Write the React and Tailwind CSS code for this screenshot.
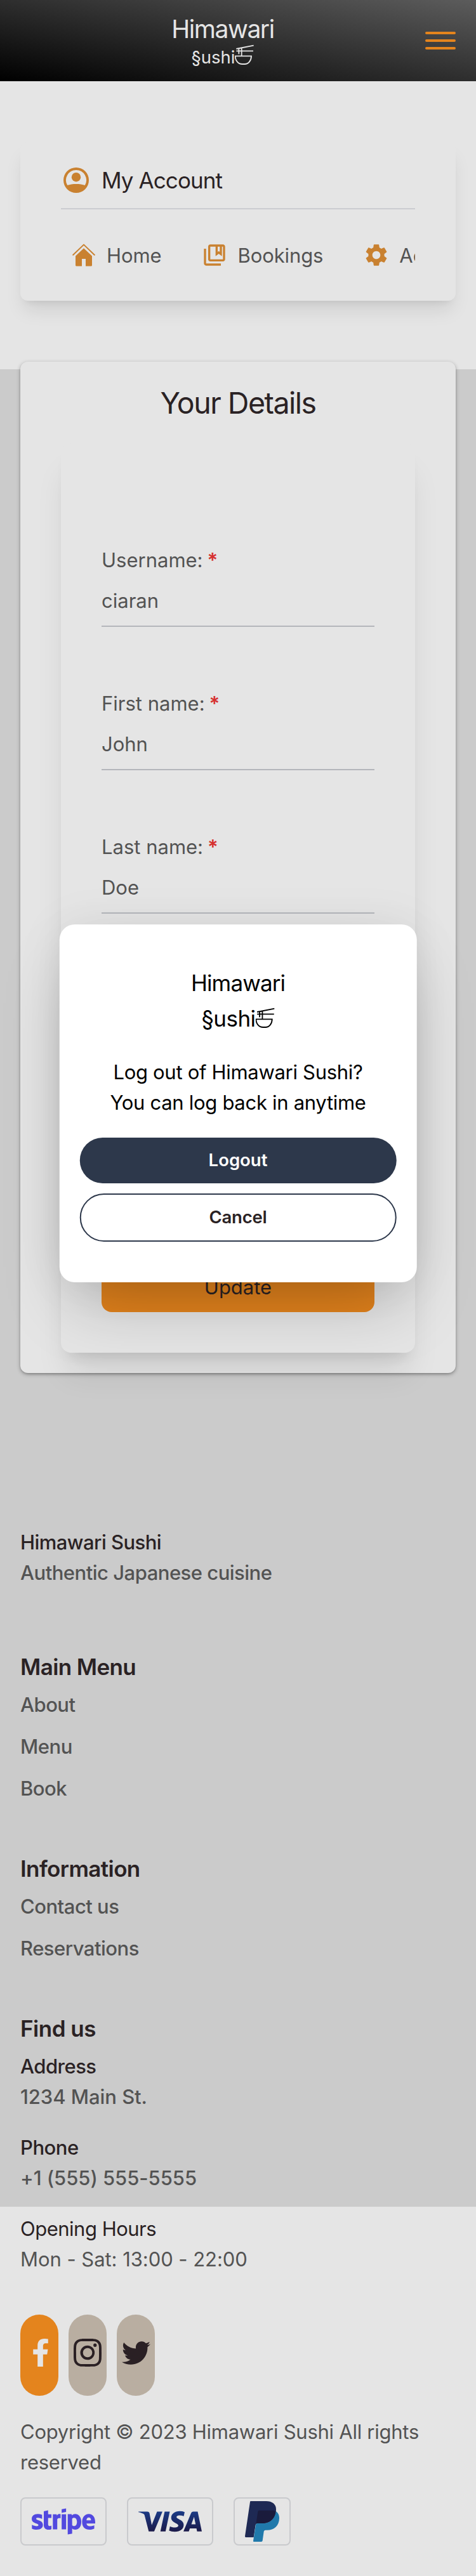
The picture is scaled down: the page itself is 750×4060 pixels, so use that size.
import { MdOutlineCollectionsBookmark, MdSettings } from "react-icons/md";
import { FaFacebookF, FaStripe, FaTwitter } from "react-icons/fa";
import { BsInstagram } from "react-icons/bs";
import { SiVisa } from "react-icons/si";

function BowlIcon({ className }) {
  return (
    <svg viewBox="0 0 90 96" fill="none" stroke="currentColor" strokeWidth="5.5" className={className}>
      <path d="M7 21 89 5M7 31h80M19 19v27M32 14v41" />
      <path d="M2 55h76c0 22-14 38-31 38h-12C16 93 2 77 2 55Z" />
    </svg>
  );
}

function AccountIcon() {
  return (
    <svg viewBox="0 0 40 40" className="h-10 w-10 text-[#c98130]">
      <path
        fill="currentColor"
        fillRule="evenodd"
        d="M20 0a20 20 0 1 1 0 40 20 20 0 0 1 0-40Zm0 4A16 16 0 0 0 6.2 28.1C9.8 26.6 15 26 20 26s10.2.6 13.8 2.1A16 16 0 0 0 20 4Z"
      />
      <circle cx="20" cy="15.2" r="7.2" fill="currentColor" />
    </svg>
  );
}

function HomeIcon() {
  return (
    <svg viewBox="0 0 36 36" className="h-9 w-9">
      <path d="M1.2 17.8 18 1.6l16.8 16.2" fill="none" stroke="currentColor" strokeWidth="2" strokeLinecap="round" strokeLinejoin="round" />
      <path d="M18 7.2 31 19.4V34q0 1.6-1.6 1.6H21V24h-6v11.6H6.6Q5 35.600 5 34V19.4Z" fill="currentColor" />
    </svg>
  );
}

function PaypalIcon() {
  return (
    <svg viewBox="0 0 162 192" className="h-16 w-[54px]">
      <path d="M28 0h72c28 0 47 14 47 38 0 42-26 67-65 67H60c-6 0-9 3-10 8l-9 58H4c-3 0-4-2-4-5L24 4c0-3 2-4 4-4Z" fill="#1e2954" />
      <path d="M146 48c12 8 16 20 16 32 0 36-24 57-58 57h-7c-5 0-7 3-8 7l-6 43c-1 3-3 5-6 5H43c-3 0-4-2-4-4l12-76c1-5 4-7 9-7h22c36 0 60-21 64-57Z" fill="#2079ab" />
      <path d="M66 44h60c8 0 15 1 20 4-4 36-28 57-64 57H60c-3 0-6 1-8 3l9-58c1-4 2-6 5-6Z" fill="#1a1b3c" />
    </svg>
  );
}

function Tab({ icon, label }) {
  return (
    <div className="flex shrink-0 items-center gap-4 px-4">
      <span className="flex h-10 w-10 items-center justify-center text-[#c98130]">{icon}</span>
      <span className="pt-0.5 text-[31px] leading-[48px] tracking-[-0.1px] text-[#535353]">{label}</span>
    </div>
  );
}

function Field({ label, value }) {
  return (
    <div className="flex flex-col gap-4">
      <div className="h-12 pt-px text-[31px] leading-[48px] text-[#535353]">
        {label}
        {label && <span className="ml-[7px] font-semibold text-[#d6302f]">*</span>}
      </div>
      <div className="flex h-[66px] items-start border-b-2 border-[#b4b6bb] pt-px text-[31px] leading-[48px] text-[#535353]">
        {value}
      </div>
    </div>
  );
}

function FooterMenu({ title, items }) {
  return (
    <nav className="pb-14">
      <h3 className="mb-2 text-[35px] leading-[56px] font-semibold tracking-[-0.6px] text-[#2a2224]">{title}</h3>
      <ul>
        {items.map((item) => (
          <li key={item} className="pb-[18px] text-[31px] leading-[48px] font-medium tracking-[-0.5px] text-[#535353]">
            {item}
          </li>
        ))}
      </ul>
    </nav>
  );
}

function Contact({ title, className, children }) {
  return (
    <div className={className}>
      <p className="tracking-[-0.5px] text-[#2a2224]">{title}</p>
      <p className="tracking-[-0.05px] text-[#535353]">{children}</p>
    </div>
  );
}

const cardShadow = "shadow-[0_20px_30px_-6px_rgba(0,0,0,0.1),0_8px_12px_-8px_rgba(0,0,0,0.1)]";

export default function App() {
  return (
    <div className="relative h-[4060px] w-[750px] overflow-hidden bg-[linear-gradient(#e5e5e5_582px,#cbcbcb_582px,#cbcbcb_3478px,#e5e5e5_3478px)] font-['Inter','Liberation_Sans',sans-serif]">
      <header className="flex h-32 items-center bg-[linear-gradient(to_top_right,#000000,#5c5c5c)] px-8">
        <div className="flex flex-1 flex-col items-center text-[#e5e5e5]">
          <span className="text-[39px] leading-[56px] tracking-[-1.45px]">Himawari</span>
          <span className="-mt-1 flex items-center text-[27.5px] leading-10">
            §ushi
            <BowlIcon className="mb-[9px] h-8 w-[30px]" />
          </span>
        </div>
        <button className="flex w-12 flex-col gap-2" aria-label="Menu">
          <span className="h-1 w-full rounded-full bg-[#e4841d]" />
          <span className="h-1 w-full rounded-full bg-[#e4841d]" />
          <span className="h-1 w-full rounded-full bg-[#e4841d]" />
        </button>
      </header>

      <main className="flex flex-col gap-24 px-8 pt-24">
        <section className={`h-[250px] rounded-xl bg-[#e5e5e5] px-16 ${cardShadow}`}>
          <div className="flex h-[106px] items-center gap-4 border-b-2 border-[#cbccd0] pt-4">
            <span className="flex h-12 w-12 items-center justify-center">
              <AccountIcon />
            </span>
            <h1 className="text-[35px] leading-[56px] tracking-[-0.92px] text-[#2a2224]">My Account</h1>
          </div>
          <div className="flex h-36 items-center gap-8 overflow-hidden">
            <Tab icon={<HomeIcon />} label="Home" />
            <Tab icon={<MdOutlineCollectionsBookmark className="h-10 w-10 shrink-0" />} label="Bookings" />
            <Tab icon={<MdSettings className="h-[42px] w-[42px] shrink-0" />} label="Account" />
          </div>
        </section>

        <section className="rounded-xl bg-[#e5e5e5] px-16 py-8 shadow-[0_2px_6px_rgba(0,0,0,0.3),0_2px_4px_-2px_rgba(0,0,0,0.3)]">
          <h2 className="h-16 pt-px text-center text-[46.5px] leading-[64px] tracking-[-1.5px] text-[#2a2224]">Your Details</h2>
          <form className="mt-8 flex flex-col gap-24 rounded-2xl bg-[#e5e5e5] px-16 pt-40 pb-16 shadow-[0_40px_50px_-10px_rgba(0,0,0,0.1),0_16px_20px_-12px_rgba(0,0,0,0.1)]">
            <Field label="Username:" value="ciaran" />
            <Field label="First name:" value="John" />
            <Field label="Last name:" value="Doe" />
            <Field />
            <Field />
            <div className="flex h-20 items-center justify-center rounded-2xl bg-[#e4841d] pt-0.5 text-[31px] text-[#2a2224]">
              Update
            </div>
          </form>
        </section>
      </main>

      <footer className="px-8 pt-[243px] text-[31px] leading-[48px] font-medium">
        <div className="mb-24">
          <p className="tracking-[-0.54px] text-[#2a2224]">Himawari Sushi</p>
          <p className="tracking-[-0.5px] text-[#535353]">Authentic Japanese cuisine</p>
        </div>
        <FooterMenu title="Main Menu" items={["About", "Menu", "Book"]} />
        <FooterMenu title="Information" items={["Contact us", "Reservations"]} />
        <h3 className="mb-2 text-[35px] leading-[56px] font-semibold tracking-[-0.5px] text-[#2a2224]">Find us</h3>
        <div className="flex flex-col gap-8">
          <Contact title="Address">1234 Main St.</Contact>
          <Contact title="Phone">+1 (555) 555-5555</Contact>
          <Contact title="Opening Hours" className="font-normal">
            Mon - Sat: 13:00 - 22:00
          </Contact>
        </div>
        <div className="mt-[63px] flex gap-4">
          <a className="flex h-32 w-[60px] items-center justify-center rounded-full bg-[#e4841d] pb-2 text-[#e5e5e5]">
            <FaFacebookF className="ml-1 h-11 w-11 shrink-0" />
          </a>
          <a className="flex h-32 w-[60px] items-center justify-center rounded-full bg-[#b9aea1] pb-2 text-[#2a2024]">
            <BsInstagram className="h-11 w-11 shrink-0" />
          </a>
          <a className="flex h-32 w-[60px] items-center justify-center rounded-full bg-[#b9aea1] pb-2 text-[#2a2024]">
            <FaTwitter className="h-[45px] w-[45px] shrink-0" />
          </a>
        </div>
        <p className="mt-[33px] font-normal tracking-[-0.26px] text-[#535353]">
          Copyright © 2023 Himawari Sushi All rights reserved
        </p>
        <div className="mt-[31px] flex gap-8">
          <span className="flex h-[76px] w-[136px] items-center justify-center rounded-lg border-2 border-[#c9cacd] text-[#5249df]">
            <FaStripe className="h-20 w-[100px] shrink-0" />
          </span>
          <span className="flex h-[76px] w-[136px] items-center justify-center rounded-lg border-2 border-[#c9cacd]">
            <svg className="h-0 w-0">
              <linearGradient id="visa-ink" x1="0" y1="0" x2="0" y2="1">
                <stop offset="0" stopColor="#1b3b86" />
                <stop offset="1" stopColor="#1c1a49" />
              </linearGradient>
            </svg>
            <SiVisa className="h-[100px] w-[100px] shrink-0" fill="url(#visa-ink)" />
          </span>
          <span className="flex h-[76px] w-[90px] items-center justify-center rounded-lg border-2 border-[#c9cacd]">
            <PaypalIcon />
          </span>
        </div>
      </footer>

      <div
        role="dialog"
        className="absolute top-[1457px] left-1/2 flex h-[564px] w-3/4 -translate-x-1/2 flex-col rounded-3xl bg-white px-8 pt-16 shadow-[0_50px_100px_-24px_rgba(0,0,0,0.25),0_0_80px_rgba(0,0,0,0.06)]"
      >
        <div className="flex flex-col items-center text-[35px] leading-[56px] text-black">
          <span className="tracking-[-0.89px]">Himawari</span>
          <span className="flex items-center tracking-[-0.5px]">
            §ushi
            <BowlIcon className="mb-0.5 h-8 w-[30px]" />
          </span>
        </div>
        <p className="mt-[33px] text-center text-[31px] leading-[48px] tracking-[-0.3px] text-black">
          Log out of Himawari Sushi?
          <br />
          You can log back in anytime
        </p>
        <button className="mt-[31px] h-[72px] rounded-full bg-[#2d384b] text-[27.5px] font-semibold text-white">Logout</button>
        <button className="mt-4 h-[76px] rounded-full border-2 border-[#2d384b] text-[27.5px] font-semibold tracking-[-0.2px] text-[#2a2224]">
          Cancel
        </button>
      </div>
    </div>
  );
}
